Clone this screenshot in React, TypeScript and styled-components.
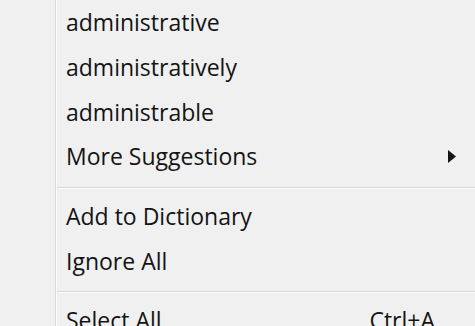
import React from "react";
import styled, { createGlobalStyle } from "styled-components";

const Global = createGlobalStyle`
  html, body { margin: 0; padding: 0; background: #f0f0f0; }
  body { overflow: hidden; }
`;

const Menu = styled.div`
  display: flex;
  width: 475px;
  height: 326px;
  background: #f0f0f0;
  font-family: "Open Sans", "Noto Sans", sans-serif;
  color: #141414;
  overflow: hidden;
`;

const Gutter = styled.div`
  width: 55px;
  flex: none;
  border-right: 1px solid #dcdcdc;
  box-shadow: 1px 0 0 #fbfbfb;
`;

const List = styled.div`
  flex: 1;
  display: flex;
  flex-direction: column;
  padding-left: 1px;
`;

const Item = styled.div`
  height: 44.7px;
  flex: none;
  display: flex;
  align-items: center;
  padding-left: 9px;
  padding-right: 18px;
  font-size: 23px;
  white-space: nowrap;
`;

const Label = styled.span`
  flex: 1;
`;

const Shortcut = styled.span`
  margin-right: 22px;
`;

const Separator = styled.div`
  height: 15px;
  flex: none;
  display: flex;
  flex-direction: column;
  padding-top: 8px;
  box-sizing: border-box;
  &::before {
    content: "";
    height: 1px;
    background: #d7d7d7;
  }
  &::after {
    content: "";
    height: 1px;
    background: #fbfbfb;
  }
`;

const Arrow = () => (
  <svg width="10" height="15" viewBox="0 0 10 15">
    <path d="M1 1 L9 7.5 L1 14 Z" fill="#141414" />
  </svg>
);

export default function App() {
  return (
    <>
      <Global />
      <Menu>
        <Gutter />
        <List>
          <Item><Label>administrative</Label></Item>
          <Item><Label>administratively</Label></Item>
          <Item><Label>administrable</Label></Item>
          <Item>
            <Label>More Suggestions</Label>
            <Arrow />
          </Item>
          <Separator />
          <Item><Label>Add to Dictionary</Label></Item>
          <Item><Label>Ignore All</Label></Item>
          <Separator />
          <Item>
            <Label>Select All</Label>
            <Shortcut>Ctrl+A</Shortcut>
          </Item>
        </List>
      </Menu>
    </>
  );
}
